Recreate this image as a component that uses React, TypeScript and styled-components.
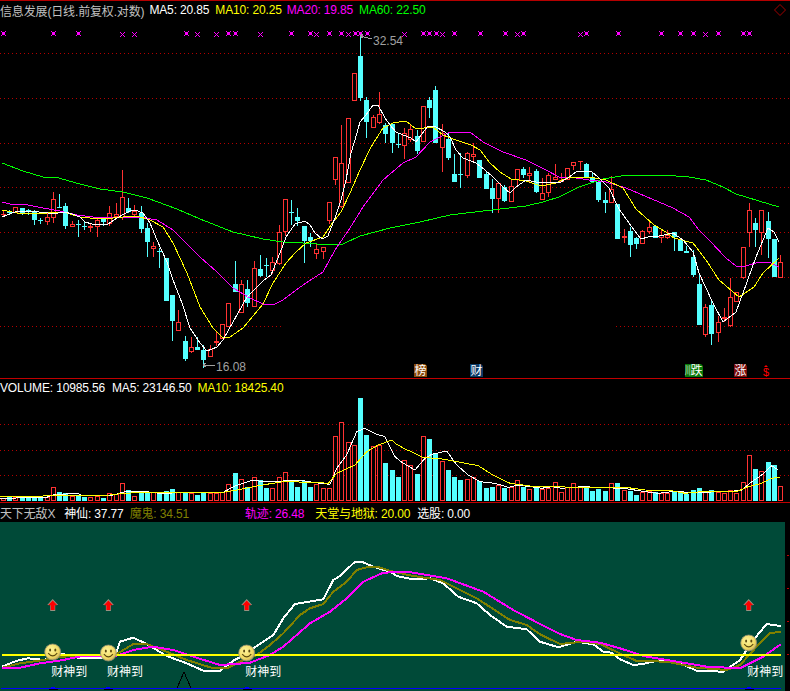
import React from "react";
import styled, { createGlobalStyle } from "styled-components";

const RED = "#ff3232";
const CYAN = "#54ffff";
const DOT_RED = "#b40000";
const STEP = 777.6 / 124;
const barX = (i: number) => Math.round(2.7 + i * STEP);

type Pt = [number, number];
// body top, body bottom, wick top, wick bottom, up, volume top
type Row = [number, number, number, number, number, number];

const rows: Row[] = [
  [214, 215, 211, 217, 1, 498], [212, 213, 210, 214, 0, 497], [207, 213, 207, 213, 1, 497], [208, 213, 208, 215, 0, 498],
  [210, 212, 209, 215, 0, 498], [212, 220, 210, 225, 0, 497], [220, 221, 218, 224, 0, 498], [217, 222, 213, 225, 1, 497],
  [199, 218, 192, 223, 1, 487], [207, 208, 194, 208, 0, 492], [206, 226, 203, 229, 0, 493], [224, 227, 221, 227, 1, 496],
  [224, 225, 220, 237, 0, 495], [226, 227, 222, 230, 0, 497], [226, 228, 223, 232, 1, 497], [220, 227, 217, 237, 1, 496],
  [219, 222, 217, 226, 0, 498], [213, 224, 206, 226, 1, 493], [214, 217, 203, 218, 1, 494], [197, 218, 170, 220, 1, 483],
  [208, 212, 198, 213, 0, 490], [211, 215, 205, 217, 1, 496], [213, 229, 206, 233, 0, 492], [228, 242, 223, 257, 0, 492],
  [246, 249, 242, 257, 1, 492], [251, 252, 248, 268, 0, 493], [258, 301, 258, 301, 0, 491], [295, 321, 295, 341, 0, 489],
  [322, 331, 310, 331, 1, 492], [341, 359, 336, 361, 0, 492], [347, 352, 337, 353, 1, 493], [347, 350, 337, 350, 0, 495],
  [350, 360, 345, 368, 0, 493], [349, 357, 345, 357, 1, 493], [341, 343, 332, 346, 1, 493], [324, 339, 324, 339, 1, 492],
  [303, 327, 303, 327, 1, 484], [284, 292, 261, 292, 0, 473], [284, 313, 280, 313, 1, 479], [289, 303, 280, 307, 0, 487],
  [268, 307, 261, 307, 1, 477], [269, 276, 255, 277, 0, 480], [265, 266, 258, 277, 0, 488], [262, 271, 257, 274, 1, 488],
  [232, 264, 225, 265, 1, 477], [199, 232, 199, 236, 1, 472], [212, 213, 200, 225, 0, 481], [217, 221, 208, 226, 0, 487],
  [226, 241, 226, 263, 0, 481], [237, 241, 233, 247, 0, 487], [249, 254, 243, 259, 1, 484], [247, 252, 247, 259, 1, 488],
  [202, 221, 202, 224, 1, 488], [157, 180, 157, 185, 1, 436], [163, 207, 125, 208, 1, 422], [118, 183, 118, 183, 1, 442],
  [73, 101, 73, 101, 1, 445], [56, 98, 35, 101, 0, 398], [100, 122, 97, 138, 0, 435], [117, 128, 115, 128, 1, 446],
  [114, 123, 92, 124, 1, 445], [125, 134, 123, 143, 0, 463], [124, 143, 124, 153, 0, 470], [144, 145, 134, 148, 0, 477],
  [133, 146, 128, 159, 1, 460], [129, 140, 124, 142, 1, 465], [136, 151, 130, 154, 0, 474], [106, 142, 106, 142, 1, 436],
  [100, 108, 97, 118, 0, 439], [90, 143, 86, 143, 0, 453], [133, 148, 124, 172, 1, 461], [139, 158, 133, 160, 0, 470],
  [174, 182, 154, 182, 0, 477], [174, 175, 153, 188, 0, 480], [153, 176, 152, 178, 1, 479], [154, 157, 143, 162, 1, 477],
  [160, 178, 160, 178, 0, 481], [174, 189, 172, 189, 0, 488], [188, 199, 179, 213, 0, 487], [183, 199, 183, 213, 1, 485],
  [187, 201, 185, 202, 0, 488], [186, 202, 180, 202, 1, 487], [169, 180, 169, 187, 1, 480], [169, 175, 167, 178, 0, 487],
  [173, 176, 167, 182, 1, 489], [171, 192, 169, 193, 0, 488], [193, 200, 178, 200, 1, 489], [175, 193, 173, 197, 1, 488],
  [177, 180, 164, 180, 1, 482], [180, 182, 173, 182, 1, 492], [168, 180, 168, 180, 1, 487], [162, 166, 162, 170, 1, 483],
  [161, 162, 161, 170, 1, 486], [164, 177, 163, 177, 0, 488], [177, 182, 172, 182, 0, 491], [182, 200, 182, 202, 0, 489],
  [200, 203, 192, 213, 0, 491], [189, 203, 176, 203, 1, 483], [204, 239, 204, 239, 0, 483], [236, 238, 229, 243, 1, 490],
  [231, 245, 227, 257, 0, 491], [238, 244, 237, 249, 0, 495], [231, 244, 230, 244, 1, 492], [227, 232, 221, 234, 1, 491],
  [226, 238, 226, 238, 0, 492], [235, 238, 230, 243, 1, 493], [235, 238, 230, 239, 1, 493], [232, 237, 232, 251, 0, 492],
  [240, 251, 239, 251, 0, 493], [251, 253, 246, 253, 0, 494], [257, 275, 250, 277, 0, 490], [284, 325, 273, 325, 0, 488],
  [307, 335, 304, 337, 1, 492], [305, 334, 301, 345, 0, 490], [322, 333, 316, 342, 1, 492], [317, 319, 308, 322, 1, 493],
  [297, 326, 278, 327, 1, 490], [292, 302, 292, 302, 1, 493], [247, 278, 247, 279, 1, 482], [210, 233, 203, 247, 1, 455],
  [223, 230, 218, 247, 0, 469], [210, 233, 210, 255, 1, 471], [221, 239, 212, 258, 0, 462], [239, 277, 239, 277, 0, 465],
  [262, 278, 255, 278, 1, 486],
];

const ma5: Pt[] = [
  [2, 217], [15, 212], [30, 211], [48, 213], [58, 213], [65, 212], [72, 214], [80, 217], [85, 222], [92, 224], [108, 224], [117, 218],
  [124, 214], [130, 211], [135, 210], [143, 213], [150, 223], [157, 240], [167, 262], [173, 280], [182, 303], [190, 328], [200, 343],
  [207, 351], [217, 347], [223, 340], [233, 322], [247, 297], [263, 281], [271, 275], [280, 253], [286, 237], [295, 224], [305, 221],
  [310, 225], [315, 233], [322, 239], [328, 236], [335, 218], [341, 200], [346, 180], [351, 153], [355, 140], [360, 122], [366, 115],
  [373, 105], [378, 105], [385, 118], [390, 125], [396, 132], [403, 135], [411, 138], [416, 142], [421, 135], [428, 126], [436, 127],
  [445, 132], [450, 137], [456, 150], [463, 158], [476, 163], [485, 170], [493, 177], [503, 187], [510, 193], [516, 187], [526, 180],
  [536, 182], [559, 183], [568, 178], [576, 172], [591, 171], [599, 178], [609, 188], [619, 209], [634, 230], [641, 239], [648, 237],
  [659, 236], [673, 233], [683, 240], [693, 252], [699, 273], [713, 303], [723, 322], [736, 312], [743, 293], [756, 257], [768, 228],
  [774, 232], [779, 242],
];
const ma10: Pt[] = [
  [2, 210], [17, 213], [33, 214], [47, 213], [57, 212], [67, 213], [80, 217], [100, 219], [113, 218], [123, 217], [137, 216], [150, 220],
  [163, 227], [173, 243], [187, 273], [200, 307], [213, 328], [222, 337], [230, 337], [243, 328], [263, 304], [273, 283], [286, 263],
  [296, 252], [306, 243], [323, 237], [331, 225], [341, 212], [350, 193], [360, 170], [371, 147], [383, 128], [393, 123], [406, 121],
  [411, 125], [416, 129], [433, 127], [443, 135], [456, 140], [471, 145], [480, 150], [490, 163], [500, 172], [511, 179], [526, 181],
  [541, 186], [556, 183], [569, 177], [589, 177], [606, 180], [623, 188], [636, 209], [654, 225], [666, 232], [674, 238], [693, 243],
  [706, 260], [719, 280], [739, 297], [754, 287], [763, 273], [779, 258],
];
const ma20: Pt[] = [
  [2, 202], [10, 204], [23, 204], [33, 206], [43, 208], [60, 211], [77, 215], [93, 217], [117, 217], [140, 217], [157, 220], [173, 230],
  [200, 257], [217, 272], [233, 288], [250, 298], [263, 304], [273, 305], [283, 300], [296, 290], [306, 283], [323, 272], [335, 250],
  [350, 228], [363, 207], [383, 180], [403, 163], [416, 157], [430, 142], [450, 132], [470, 132], [483, 142], [503, 152], [526, 160],
  [546, 170], [559, 177], [576, 178], [589, 180], [606, 182], [626, 188], [659, 202], [673, 208], [689, 217], [699, 230], [709, 240],
  [726, 258], [736, 266], [746, 266], [759, 262], [769, 262], [779, 267],
];
const ma60: Pt[] = [
  [2, 163], [23, 171], [43, 177], [55, 177], [80, 184], [100, 189], [123, 192], [147, 198], [177, 209], [200, 219], [233, 232], [263, 239],
  [283, 242], [303, 243], [330, 245], [343, 244], [360, 236], [390, 228], [420, 222], [450, 215], [483, 211], [526, 206], [543, 202],
  [559, 197], [579, 187], [603, 179], [621, 176], [639, 175], [663, 175], [689, 177], [706, 180], [723, 187], [736, 194], [759, 201],
  [779, 207],
];

// traces read off 3x crops, so they are written in crop units
const fromCrop = (ox: number, oy: number, pts: Pt[]): Pt[] => pts.map(([x, y]) => [ox + x / 3, oy + y / 3]);

const volMa5: Pt[] = [
  ...fromCrop(0, 375, [[0, 370], [100, 368], [140, 367], [165, 358], [235, 356], [245, 362], [300, 362], [340, 360], [375, 350], [440, 350], [480, 355], [600, 352], [670, 352], [700, 335], [730, 325], [760, 315], [790, 320], [850, 318], [900, 316], [960, 325], [990, 328], [1010, 280], [1040, 240], [1070, 170], [1095, 160], [1130, 178], [1155, 185], [1185, 245]]),
  ...fromCrop(395, 375, [[20, 262], [60, 285], [90, 250], [110, 238], [155, 228], [185, 270], [220, 300], [255, 320], [300, 325], [340, 337], [370, 330], [440, 340], [470, 335], [500, 340], [560, 335], [640, 338], [700, 342], [750, 350], [790, 355], [830, 350], [900, 352], [1000, 350], [1040, 345], [1070, 320], [1100, 300], [1130, 272], [1150, 285]]),
];
const volMa10: Pt[] = [
  ...fromCrop(0, 375, [[0, 365], [100, 365], [170, 360], [240, 362], [330, 360], [370, 355], [450, 352], [670, 352], [710, 345], [760, 335], [800, 328], [850, 320], [940, 322], [985, 325], [1010, 295], [1065, 270], [1100, 230], [1135, 210], [1175, 195]]),
  ...fromCrop(395, 375, [[0, 205], [30, 222], [60, 235], [85, 248], [130, 250], [175, 258], [250, 272], [290, 298], [345, 325], [420, 335], [470, 335], [550, 337], [700, 338], [750, 345], [830, 347], [870, 355], [920, 350], [1030, 348], [1060, 335], [1100, 325], [1130, 310], [1155, 307]]),
];

const godLine: Pt[] = [
  ...fromCrop(0, 500, [[6, 500], [50, 482], [85, 475], [135, 480], [150, 468], [190, 462], [240, 475], [300, 475], [345, 468], [360, 425], [400, 413], [440, 432], [470, 450], [500, 468], [560, 490], [610, 512], [660, 512], [700, 482], [740, 462]]),
  ...fromCrop(250, 500, [[10, 445], [70, 405], [100, 355], [135, 312], [220, 298], [250, 240], [270, 228], [315, 185], [335, 185], [370, 200], [420, 215], [440, 228], [490, 238], [540, 235], [580, 250], [625, 290], [680, 310], [720, 345], [770, 380], [830, 388], [870, 425]]),
  ...fromCrop(540, 500, [[55, 442], [110, 425], [160, 433], [190, 455], [215, 458], [240, 478], [280, 495], [310, 492], [350, 482], [380, 482], [420, 490], [470, 512], [550, 515], [600, 480], [640, 420], [680, 372], [722, 378]]),
];
const ghostLine: Pt[] = [
  ...fromCrop(0, 500, [[6, 503], [60, 490], [130, 480], [190, 470], [250, 465], [300, 467], [350, 462], [400, 432], [440, 432], [500, 455], [560, 480], [640, 505], [680, 505], [720, 485]]),
  ...fromCrop(250, 500, [[20, 465], [60, 435], [100, 400], [150, 345], [180, 325], [220, 312], [250, 275], [290, 245], [320, 210], [350, 202], [380, 200], [430, 215], [490, 228], [570, 240], [620, 265], [680, 295], [780, 360], [830, 375], [870, 403]]),
  ...fromCrop(540, 500, [[60, 432], [130, 425], [180, 432], [250, 465], [290, 483], [380, 485], [470, 503], [560, 510], [600, 495], [650, 440], [690, 400], [722, 395]]),
];
const trackLine: Pt[] = [
  ...fromCrop(0, 500, [[6, 505], [60, 503], [120, 490], [190, 480], [250, 467], [350, 467], [400, 450], [460, 440], [520, 450], [580, 470], [660, 495], [730, 490]]),
  ...fromCrop(250, 500, [[0, 488], [60, 465], [100, 440], [180, 370], [240, 335], [290, 295], [340, 245], [400, 218], [470, 215], [590, 235], [700, 275], [790, 330], [870, 372]]),
  ...fromCrop(540, 500, [[60, 402], [110, 420], [180, 428], [240, 445], [310, 468], [400, 483], [500, 500], [600, 505], [670, 470], [722, 433]]),
];

const bigStars = [3, 53, 78, 186, 228, 235, 291, 310, 329, 341, 355, 360, 367, 423, 429, 436, 454, 480, 505, 523, 586, 618, 661, 680, 693, 718, 743, 749];
const smallStars = [122, 134, 197, 216, 260, 316, 348, 404, 442, 517, 580, 705];
const signals = [52.7, 108.4, 246.7, 748.7];

const GlobalStyle = createGlobalStyle`
  html, body {
    margin: 0;
    padding: 0;
    background: #000;
  }
`;

const Screen = styled.div`
  width: 790px;
  height: 691px;
  overflow: hidden;
  background: #000;
  display: flex;
  flex-direction: column;
  font-family: "Liberation Sans", "Noto Sans CJK SC", sans-serif;
  font-size: 12px;
`;

const Panel = styled.section<{ $line: string }>`
  display: flex;
  flex-direction: column;
  border-top: 1px solid ${(p) => p.$line};
`;

const Legend = styled.div<{ $height: number }>`
  height: ${(p) => p.$height}px;
  display: flex;
  align-items: center;
  white-space: nowrap;
`;

const LegendItem = styled.span<{ $color: string; $left?: number }>`
  color: ${(p) => p.$color};
  margin-left: ${(p) => p.$left ?? 0}px;
  letter-spacing: -0.15px;
`;

const Corner = styled.svg`
  margin-left: auto;
  margin-right: 4px;
  width: 12px;
  height: 12px;
`;

const Plot = styled.svg`
  display: block;
  flex: none;
`;

const IndicatorRow = styled.div`
  display: flex;
  height: 169px;
`;

const IndicatorBody = styled.div`
  width: 785px;
  background: #004a38;
`;

const TickGutter = styled.div`
  flex: 1;
  display: flex;
  flex-direction: column;
  align-items: flex-end;
  gap: 32px;
  padding: 33px 1px 0 0;
`;

const Tick = styled.i`
  width: 2px;
  height: 1px;
  background: #c00000;
`;

const ChartText = styled.text<{ $color: string; $size?: number }>`
  fill: ${(p) => p.$color};
  font-family: "Liberation Sans", "Noto Sans CJK SC", sans-serif;
  font-size: ${(p) => p.$size ?? 12}px;
`;

const Line = ({ pts, color, width = 1 }: { pts: Pt[]; color: string; width?: number }) => (
  <polyline
    points={pts.map(([x, y]) => `${x.toFixed(1)},${y.toFixed(1)}`).join(" ")}
    fill="none"
    stroke={color}
    strokeWidth={width}
    shapeRendering="crispEdges"
  />
);

const DottedRule = ({ y, from = 0, to = 790 }: { y: number; from?: number; to?: number }) => (
  <line x1={from} x2={to} y1={y + 0.5} y2={y + 0.5} stroke={DOT_RED} strokeDasharray="1 3" shapeRendering="crispEdges" />
);

// hollow bars are a filled box with a black box inside, so the edge stays pure red
const Hollow = ({ x, top, bottom, color }: { x: number; top: number; bottom: number; color: string }) => (
  <g shapeRendering="crispEdges">
    <rect x={x - 2} y={top} width={5} height={bottom - top} fill={color} />
    <rect x={x - 1} y={top + 1} width={3} height={bottom - top - 2} fill="#000" />
  </g>
);

const Candle = ({ row, i }: { row: Row; i: number }) => {
  const [top, bottom, wickTop, wickBottom, up] = row;
  const x = barX(i);
  const color = up ? RED : CYAN;
  const solid = !up || bottom - top <= 2;
  return (
    <g shapeRendering="crispEdges">
      <rect x={x} y={wickTop} width={1} height={top - wickTop} fill={color} />
      <rect x={x} y={bottom} width={1} height={wickBottom - bottom} fill={color} />
      {solid ? (
        <rect x={x - 2} y={top} width={5} height={bottom - top} fill={color} />
      ) : (
        <Hollow x={x} top={top} bottom={bottom} color={color} />
      )}
    </g>
  );
};

const VolumeBar = ({ row, i }: { row: Row; i: number }) => {
  const x = barX(i);
  const top = row[5];
  return row[4] ? (
    <Hollow x={x} top={top} bottom={501} color={RED} />
  ) : (
    <rect x={x - 2} y={top} width={5} height={501 - top} fill={CYAN} shapeRendering="crispEdges" />
  );
};

const BigStar = ({ x }: { x: number }) => (
  <path
    d={`M${x - 1} 32h3v3h-3z M${x - 2} 31h1v1h-1z M${x + 2} 31h1v1h-1z M${x - 2} 35h1v1h-1z M${x + 2} 35h1v1h-1z`}
    fill="#ff00ff"
    shapeRendering="crispEdges"
  />
);

const SmallStar = ({ x }: { x: number }) => (
  <path
    d={`M${x} 34h1v1h-1z M${x - 1} 33h1v1h-1z M${x + 1} 33h1v1h-1z M${x - 1} 35h1v1h-1z M${x + 1} 35h1v1h-1z M${x - 2} 32h1v1h-1z M${x + 2} 32h1v1h-1z M${x - 2} 36h1v1h-1z M${x + 2} 36h1v1h-1z`}
    fill="#ff00ff"
    shapeRendering="crispEdges"
  />
);

const Badge = ({ x, w, bg, label }: { x: number; w: number; bg: string; label: string }) => (
  <g>
    <path d={`M${x} 364h${w - 2}l2 2v11h-${w}z`} fill={bg} />
    <ChartText $color="#fff" x={x + w - 12.5} y={375}>
      {label}
    </ChartText>
  </g>
);

const UpArrow = ({ x }: { x: number }) => (
  <g>
    <path d={`M${x} 599l5.5 6h-3v6h-5v-6h-3z`} fill="#9a8f80" />
    <path d={`M${x} 600.5l4.5 4.8h-2.5v4.7h-4v-4.7h-2.5z`} fill="#ff0000" />
  </g>
);

const Smiley = ({ x, y }: { x: number; y: number }) => (
  <g>
    <circle cx={x} cy={y} r={8} fill="url(#smile)" stroke="#8d8a70" strokeWidth={0.8} />
    <ellipse cx={x - 2.6} cy={y - 2} rx={1} ry={1.6} fill="#5c4a10" />
    <ellipse cx={x + 2.6} cy={y - 2} rx={1} ry={1.6} fill="#5c4a10" />
    <path d={`M${x - 4.5} ${y + 1.2}q4.5 5.5 9 0`} fill="none" stroke="#5c4a10" strokeWidth={1.2} />
  </g>
);

const PricePlot = () => (
  <Plot width={790} height={359} viewBox="0 19 790 359">
    {[53, 98, 143, 187, 232, 277].map((y) => (
      <DottedRule key={y} y={y} />
    ))}
    <DottedRule y={326} to={281} />
    <DottedRule y={326} from={616} />
    {bigStars.map((x) => (
      <BigStar key={x} x={x} />
    ))}
    {smallStars.map((x) => (
      <SmallStar key={x} x={x} />
    ))}
    {rows.map((row, i) => (
      <Candle key={i} row={row} i={i} />
    ))}
    <Line pts={ma60} color="#00ff00" />
    <Line pts={ma20} color="#ff00ff" />
    <Line pts={ma10} color="#ffff00" />
    <Line pts={ma5} color="#ffffff" />
    <path d="M360 36l12 3 M360 36l3 -2 M360 36l3 2" stroke="#a0a0a0" fill="none" shapeRendering="crispEdges" />
    <ChartText $color="#a0a0a0" x={373} y={45}>
      32.54
    </ChartText>
    <path d="M203 365h12 M203 365l3 -2 M203 365l3 2" stroke="#a0a0a0" fill="none" shapeRendering="crispEdges" />
    <ChartText $color="#a0a0a0" x={216} y={371}>
      16.08
    </ChartText>
    <Badge x={414} w={13} bg="#8a4a0c" label="榜" />
    <Badge x={470} w={13} bg="#0c3a66" label="财" />
    <Badge x={685} w={18} bg="#0a7a0a" label="跌" />
    <g transform="translate(685 375) scale(0.45 1)">
      <ChartText $color="#fff">川</ChartText>
    </g>
    <Badge x={734} w={13} bg="#7a0c0c" label="涨" />
    <path d="M766 365l2 2h-4z" fill="#ff0000" />
    <ChartText $color="#ff0000" $size={11} x={763} y={376}>
      $
    </ChartText>
  </Plot>
);

const VolumePlot = () => (
  <Plot width={790} height={106} viewBox="0 396 790 106">
    {[424, 450, 475].map((y) => (
      <DottedRule key={y} y={y} />
    ))}
    {rows.map((row, i) => (
      <VolumeBar key={i} row={row} i={i} />
    ))}
    <Line pts={volMa5} color="#ffffff" />
    <Line pts={volMa10} color="#ffff00" />
  </Plot>
);

const IndicatorPlot = () => (
  <Plot width={785} height={169} viewBox="0 522 785 169">
    <defs>
      <radialGradient id="smile" cx="40%" cy="35%" r="70%">
        <stop offset="0%" stopColor="#fff59a" />
        <stop offset="70%" stopColor="#f0d860" />
        <stop offset="100%" stopColor="#b8a060" />
      </radialGradient>
    </defs>
    <Line pts={godLine} color="#ffffff" width={2} />
    <Line pts={ghostLine} color="#808000" width={2} />
    <Line pts={trackLine} color="#ff00ff" width={2} />
    <Line
      pts={[
        [2, 655],
        [781, 655],
      ]}
      color="#ffff00"
      width={2}
    />
    {signals.map((x) => (
      <UpArrow key={x} x={x} />
    ))}
    {signals.map((x, n) => (
      <Smiley key={x} x={x} y={n === 3 ? 643 : n === 0 ? 652 : 653} />
    ))}
    {signals.map((x) => (
      <ChartText key={x} $color="#fff" x={x - 1.5} y={676}>
        财神到
      </ChartText>
    ))}
    <path d="M177 688L184 672L191 688" fill="none" stroke="#000" shapeRendering="crispEdges" />
    <rect x={1} y={688} width={780} height={1} fill="#0000ff" shapeRendering="crispEdges" />
    {signals.map((x) => (
      <g key={x} shapeRendering="crispEdges">
        <rect x={x - 4} y={689} width={9} height={1} fill="#000" />
        <rect x={x - 2} y={687} width={4} height={1} fill="#0000ff" />
      </g>
    ))}
  </Plot>
);

export default function App() {
  return (
    <Screen>
      <GlobalStyle />
      <Panel $line="#b40000">
        <Legend $height={18}>
          <LegendItem $color="#c0c0c0">信息发展(日线.前复权.对数)</LegendItem>
          <LegendItem $color="#fff" $left={5}>MA5: 20.85</LegendItem>
          <LegendItem $color="#ffff00" $left={6}>MA10: 20.25</LegendItem>
          <LegendItem $color="#ff00ff" $left={5}>MA20: 19.85</LegendItem>
          <LegendItem $color="#00ff00" $left={6}>MA60: 22.50</LegendItem>
          <Corner viewBox="0 0 12 12">
            <path d="M6 .5L11.5 6L6 11.5L.5 6z" fill="none" stroke="#a00000" />
          </Corner>
        </Legend>
        <PricePlot />
      </Panel>
      <Panel $line="#c00000">
        <Legend $height={17}>
          <LegendItem $color="#fff">VOLUME: 10985.56</LegendItem>
          <LegendItem $color="#fff" $left={7}>MA5: 23146.50</LegendItem>
          <LegendItem $color="#ffff00" $left={6}>MA10: 18425.40</LegendItem>
        </Legend>
        <VolumePlot />
      </Panel>
      <Panel $line="#c00000">
        <Legend $height={19}>
          <LegendItem $color="#c0c0c0">天下无敌X</LegendItem>
          <LegendItem $color="#fff" $left={9}>神仙: 37.77</LegendItem>
          <LegendItem $color="#808000" $left={6}>魔鬼: 34.51</LegendItem>
          <LegendItem $color="#ff00ff" $left={56}>轨迹: 26.48</LegendItem>
          <LegendItem $color="#ffff00" $left={11}>天堂与地狱: 20.00</LegendItem>
          <LegendItem $color="#fff" $left={7}>选股: 0.00</LegendItem>
        </Legend>
        <IndicatorRow>
          <IndicatorBody>
            <IndicatorPlot />
          </IndicatorBody>
          <TickGutter>
            <Tick />
            <Tick />
            <Tick />
            <Tick />
          </TickGutter>
        </IndicatorRow>
      </Panel>
    </Screen>
  );
}
